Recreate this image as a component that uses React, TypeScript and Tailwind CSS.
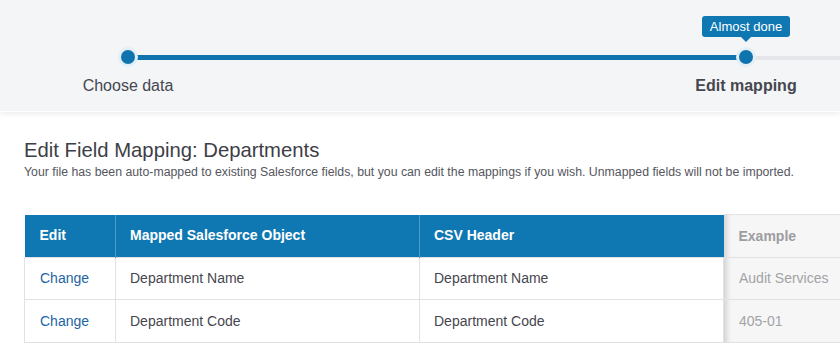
import * as React from 'react';

const rows = [
  { object: 'Department Name', header: 'Department Name', example: 'Audit Services' },
  { object: 'Department Code', header: 'Department Code', example: '405-01' },
];

function Step({ label, active, tooltip }: { label: string; active?: boolean; tooltip?: string }) {
  return (
    <div className="relative flex w-[160px] flex-col items-center pt-[50px]">
      {tooltip && (
        <div className="absolute top-[16px] flex flex-col items-center">
          <div className="h-[21px] rounded-[3px] bg-[#0f77b2] px-[8px] text-[13px] leading-[21px] text-white">
            {tooltip}
          </div>
          <div className="h-0 w-0 border-x-[5px] border-t-[5px] border-x-transparent border-t-[#0f77b2]" />
        </div>
      )}
      <div className="relative z-10 h-[14px] w-[14px] rounded-full bg-[#0f74ae] ring-[3px] ring-[#e3eef6]" />
      <div
        className={
          'mt-[10px] text-[16px] leading-[24px] text-[#45464f] ' + (active ? 'font-bold' : 'font-normal')
        }
      >
        {label}
      </div>
    </div>
  );
}

export default function App() {
  return (
    <div className="h-[343px] w-[840px] overflow-hidden bg-white font-['Liberation_Sans',Arial,sans-serif]">
      <header className="relative z-10 h-[112px] border-b border-white bg-[#f4f5f7] shadow-[0_2px_6px_rgba(0,0,0,0.08)]">
        <div className="absolute left-[128px] top-[55px] h-[5px] w-[618px] bg-[#0f74ae]" />
        <div className="absolute left-[746px] top-[56px] h-[4px] w-[94px] bg-[#e4e6ea]" />
        <div className="flex pl-[48px]">
          <Step label="Choose data" />
          <div className="w-[458px]" />
          <Step label="Edit mapping" active tooltip="Almost done" />
        </div>
      </header>

      <main className="pl-[24px] pt-[24px]">
        <h1 className="text-[20.3px] font-light leading-[28px] text-[#3d3e46]">Edit Field Mapping: Departments</h1>
        <p className="whitespace-nowrap text-[12.3px] leading-[16px] text-[#55565e]">
          Your file has been auto-mapped to existing Salesforce fields, but you can edit the mappings if you wish.
          Unmapped fields will not be imported.
        </p>

        <table className="mt-[34px] w-[850px] table-fixed border-collapse text-[14px]">
          <colgroup>
            <col className="w-[91px]" />
            <col className="w-[304px]" />
            <col className="w-[304px]" />
            <col className="w-[151px]" />
          </colgroup>
          <thead>
            <tr className="h-[43px]">
              <th className="bg-[#0f78b3] pl-[15px] text-left font-bold text-white">Edit</th>
              <th className="border-l border-[#4d9bc8] bg-[#0f78b3] pl-[14px] text-left font-bold text-white">
                Mapped Salesforce Object
              </th>
              <th className="border-l border-[#4d9bc8] bg-[#0f78b3] pl-[14px] text-left font-bold text-white">
                CSV Header
              </th>
              <th className="border-t border-[#e4e4e6] bg-[#f6f6f7] pl-[15px] text-left font-bold text-[#9c9ca0] shadow-[inset_7px_0_6px_-5px_rgba(0,0,0,0.18)]">
                Example
              </th>
            </tr>
          </thead>
          <tbody>
            {rows.map((r, i) => (
              <tr key={r.object} className={i === 0 ? 'h-[42px]' : 'h-[43px]'}>
                <td className="border border-[#e2e2e4] pl-[15px] text-[#1d64a3]">Change</td>
                <td className="border border-[#e2e2e4] pl-[14px] text-[#45464e]">{r.object}</td>
                <td className="border border-[#e2e2e4] pl-[14px] text-[#45464e]">{r.header}</td>
                <td className="border-y border-[#e2e2e4] bg-[#f6f6f7] pl-[15px] text-[#a3a3a6] shadow-[inset_7px_0_6px_-5px_rgba(0,0,0,0.18)]">
                  {r.example}
                </td>
              </tr>
            ))}
          </tbody>
        </table>
      </main>
    </div>
  );
}
